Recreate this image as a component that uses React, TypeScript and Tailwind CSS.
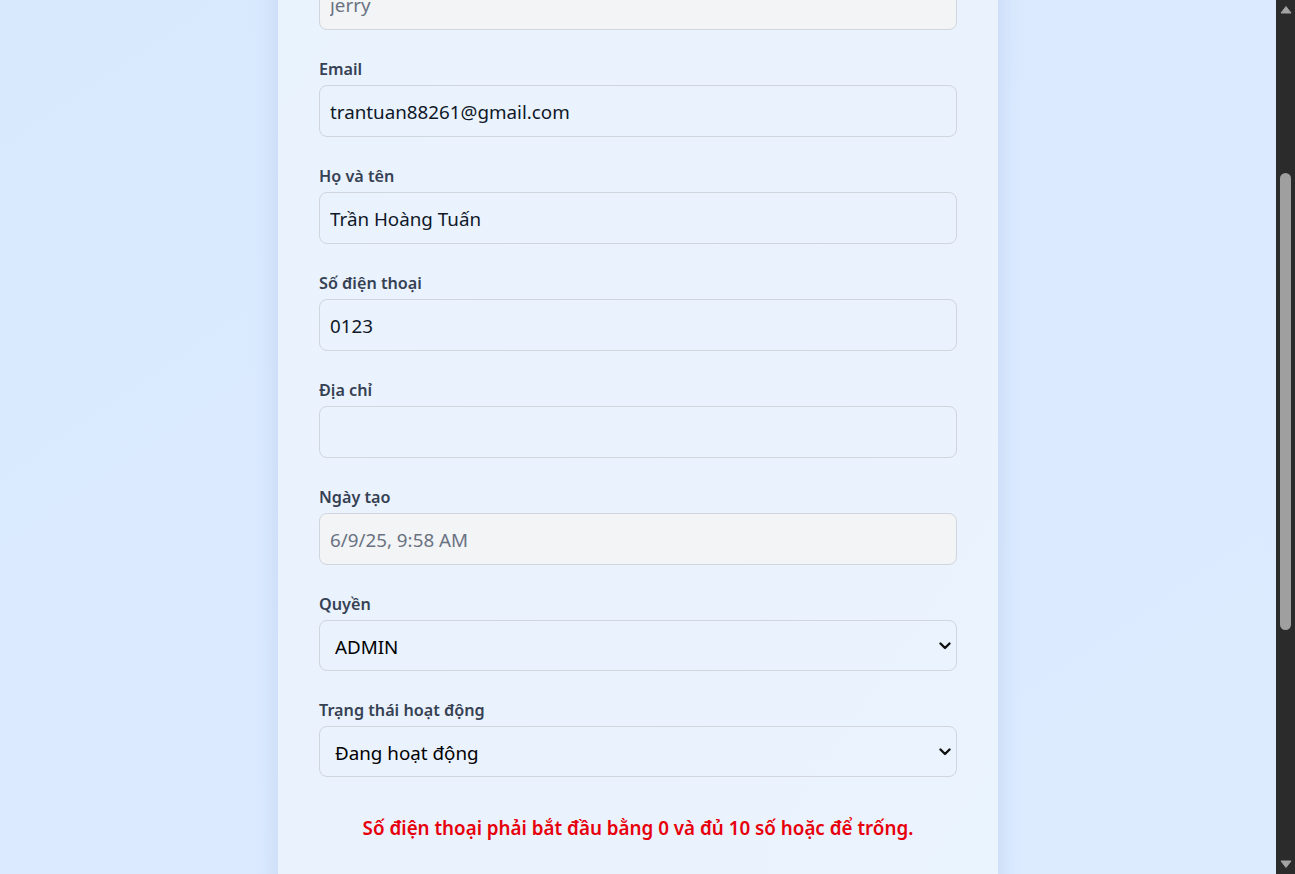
import React from 'react'

const font = { fontFamily: '"Noto Sans", "Open Sans", sans-serif' }

function Field({ label, value, disabled }: { label: string; value: string; disabled?: boolean }) {
  return (
    <div>
      <label className="mb-1 block text-[16.2px] leading-6 font-semibold text-gray-700">{label}</label>
      <input
        readOnly
        disabled={disabled}
        value={value}
        className={`block h-[52px] w-full rounded-lg border border-gray-300 px-[10px] pt-[2px] text-[18.8px] outline-none ${
          disabled ? 'bg-gray-100 text-gray-500' : 'bg-transparent text-gray-900'
        }`}
      />
    </div>
  )
}

function SelectField({ label, value, options }: { label: string; value: string; options: string[] }) {
  return (
    <div>
      <label className="mb-1 block text-[16.2px] leading-6 font-semibold text-gray-700">{label}</label>
      <div className="relative">
        <select
          value={value}
          onChange={() => {}}
          className="block h-[51px] w-full appearance-none rounded-lg border border-gray-300 bg-transparent pl-[15px] pr-8 pt-[4px] text-[18.8px] text-black outline-none"
        >
          {options.map((o) => (
            <option key={o}>{o}</option>
          ))}
        </select>
        <svg
          className="pointer-events-none absolute right-[6px] top-1/2 -translate-y-1/2"
          width="12"
          height="8"
          viewBox="0 0 12 8"
          fill="none"
        >
          <path d="M1.5 1.5 L6 6 L10.5 1.5" stroke="#111" strokeWidth="2.4" strokeLinecap="round" strokeLinejoin="round" />
        </svg>
      </div>
    </div>
  )
}

function Scrollbar() {
  return (
    <div className="flex h-full w-[19px] shrink-0 flex-col items-center bg-[#2b2b2b]">
      <div className="flex h-[19px] w-full items-center justify-center">
        <svg width="12" height="9" viewBox="0 0 12 9">
          <path d="M6 1.5 L11 8 L1 8 Z" fill="#a3a3a3" stroke="#a3a3a3" strokeLinejoin="round" />
        </svg>
      </div>
      <div className="flex w-full flex-1 flex-col items-center">
        <div className="h-[154px]" />
        <div className="h-[457px] w-[11px] rounded-full bg-[#9f9f9f]" />
      </div>
      <div className="flex h-[19px] w-full items-center justify-center">
        <svg width="12" height="9" viewBox="0 0 12 9">
          <path d="M6 7.5 L11 1 L1 1 Z" fill="#a3a3a3" stroke="#a3a3a3" strokeLinejoin="round" />
        </svg>
      </div>
    </div>
  )
}

export default function App() {
  return (
    <div className="flex h-[874px] w-full overflow-hidden" style={font}>
      <div className="flex-1 overflow-hidden bg-linear-to-br from-[#d9e9fd] via-[#dbeafe] to-[#dcebfe]">
        <div className="mx-auto mt-[-91px] w-[720px] bg-linear-to-br from-[#e9f3fe] via-[#eaf2fd] to-[#eaf4fe] p-[41px] shadow-[0_4px_24px_rgba(30,64,175,0.12)]">
          <div className="flex flex-col gap-[27px]">
            <Field label="Tên đăng nhập" value="jerry" disabled />
            <Field label="Email" value="trantuan88261@gmail.com" />
            <Field label="Họ và tên" value="Trần Hoàng Tuấn" />
            <Field label="Số điện thoại" value="0123" />
            <Field label="Địa chỉ" value="" />
            <Field label="Ngày tạo" value="6/9/25, 9:58 AM" disabled />
            <SelectField label="Quyền" value="ADMIN" options={['USER', 'ADMIN']} />
            <SelectField label="Trạng thái hoạt động" value="Đang hoạt động" options={['Đang hoạt động', 'Ngừng hoạt động']} />
            <p className="mt-[10px] text-center text-[18.8px] leading-7 font-semibold text-[#e7000b]">
              Số điện thoại phải bắt đầu bằng 0 và đủ 10 số hoặc để trống.
            </p>
            <div className="flex justify-center gap-4 pt-2">
              <button className="rounded-lg bg-blue-600 px-6 py-3 text-base font-semibold text-white">Lưu thay đổi</button>
              <button className="rounded-lg bg-gray-300 px-6 py-3 text-base font-semibold text-gray-800">Hủy</button>
            </div>
          </div>
        </div>
      </div>
      <Scrollbar />
    </div>
  )
}
